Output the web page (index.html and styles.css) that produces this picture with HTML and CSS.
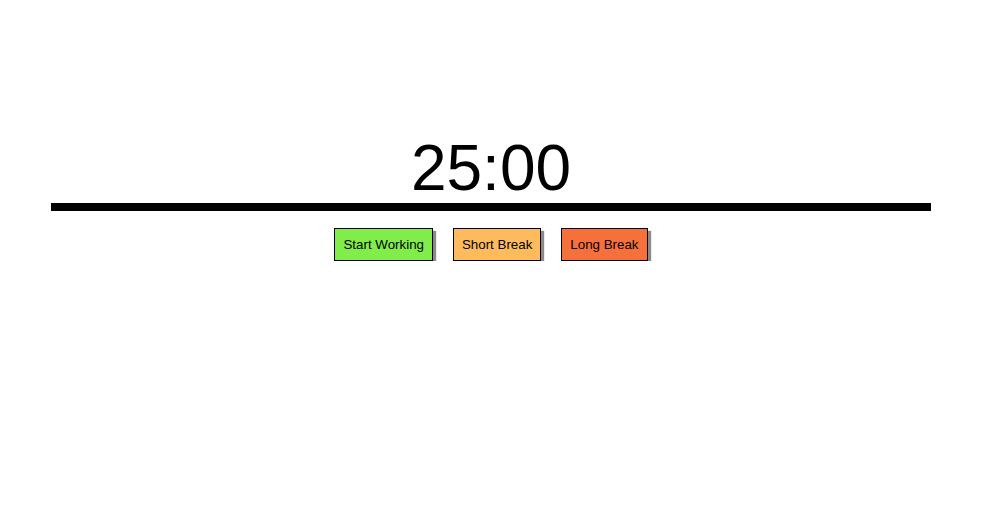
FILE: index.html
```html
<!DOCTYPE html>
<html lang="en">
<head>
    <meta charset="UTF-8">
    <meta name="viewport" content="width=device-width, initial-scale=1.0">
    <title>Pomodoro Timer</title>
    <link rel="stylesheet" href="styles.css">
</head>
<body>
    <div class="container">
        <div class="timer" id="timer">25:00</div>
        <div class="divider"></div>

        <div class="controls">
            <button class="btn work" id="startWork">Start Working</button>
            <button class="btn short" id="shortBreak">Short Break</button>
            <button class="btn long" id="longBreak">Long Break</button>
        </div>
    </div>
</body>
</html>
```

FILE: styles.css
```css
* {
    margin: 0;
    padding: 0;
    box-sizing: border-box;
}

body {
    font-family: 'Liberation Sans', Arial, sans-serif;
    background: #ffffff;
    margin: 8px;
}

.container {
    width: 880px;
    margin-left: 43px;
    padding-top: 128px;
}

.timer {
    font-size: 64px;
    line-height: 64px;
    text-align: center;
    color: #000;
}

.divider {
    height: 8px;
    background: #000;
    margin-top: 3px;
}

.controls {
    display: flex;
    justify-content: center;
    gap: 20px;
    margin-top: 17px;
}

.btn {
    font-family: 'Liberation Sans', Arial, sans-serif;
    font-size: 13.33px;
    line-height: 15px;
    padding: 8px 8px;
    height: 33px;
    border: 1px solid #000;
    color: #000;
    box-shadow: 3px 3px 1px #8a8a8a;
    cursor: pointer;
}

.work {
    background: #80ed4a;
}

.short {
    background: #fdbb5e;
}

.long {
    background: #f6703b;
}
```
